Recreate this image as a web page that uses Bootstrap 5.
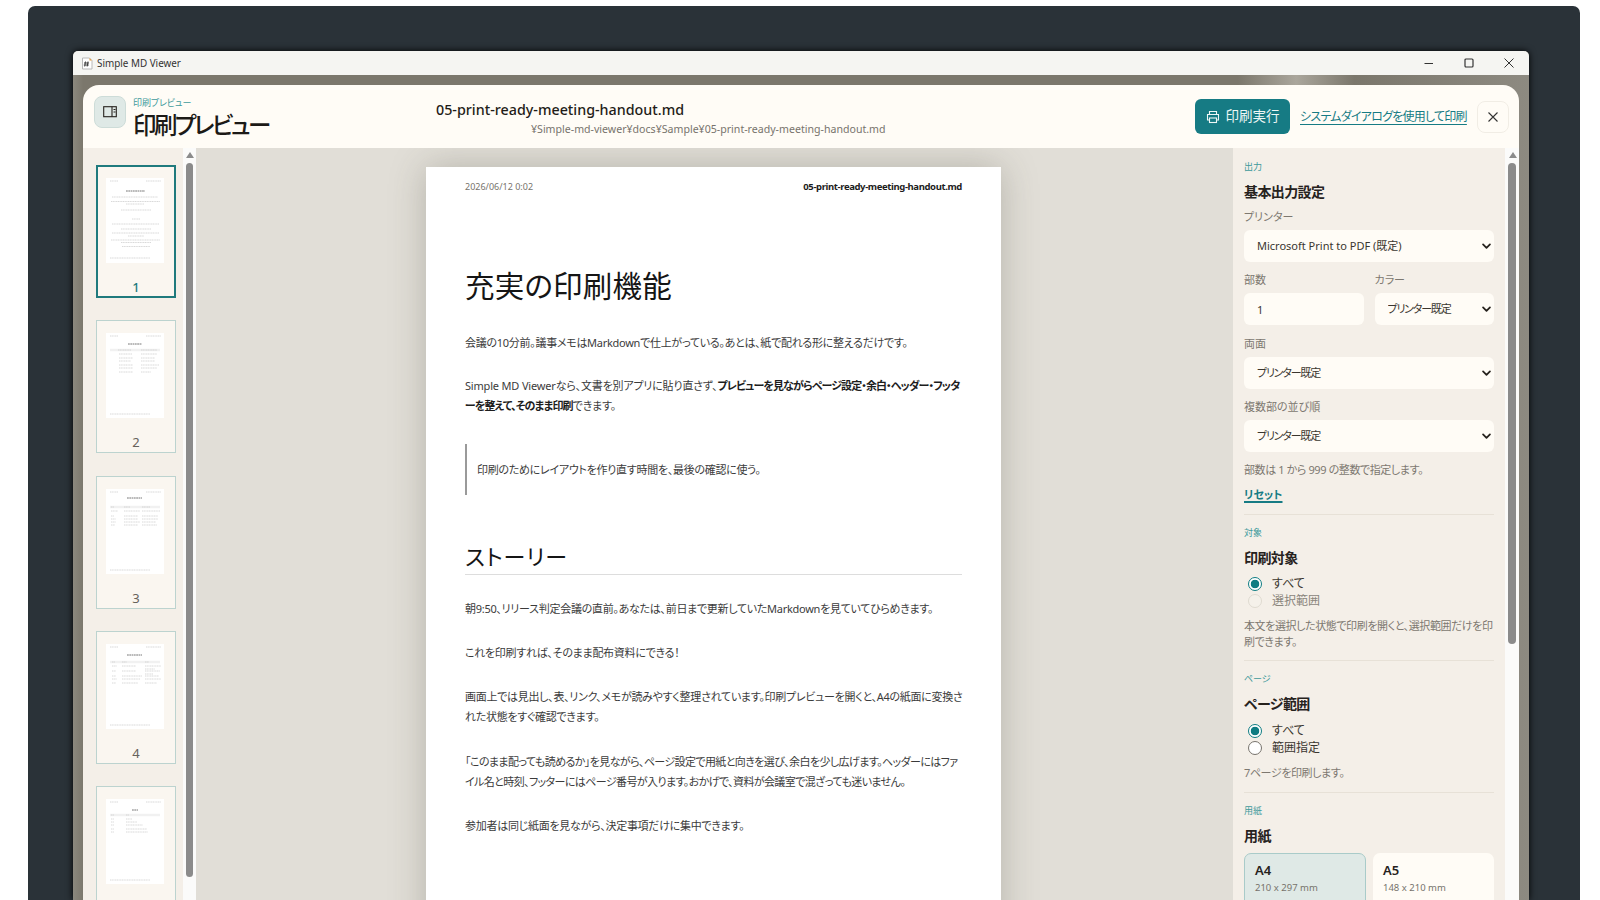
<!DOCTYPE html>
<html lang="ja">
<head>
<meta charset="utf-8">
<title>Simple MD Viewer</title>
<link href="https://cdn.jsdelivr.net/npm/bootstrap@5.3.0/dist/css/bootstrap.min.css" rel="stylesheet">
<style>
html,body{height:900px;overflow:hidden;background:#fff}
body{font-family:"Noto Sans","Noto Sans CJK JP",sans-serif;color:#26221d;font-feature-settings:"palt"}
.desk{margin:6px 20px 0 28px;height:894px;background:#2a3238;border-radius:7px 7px 0 0;padding:45px 51px 0 45px}
.appwin{height:849px;box-shadow:0 0 7px #000;border-radius:5px 5px 0 0;overflow:hidden;background:#7f7b71}
.titlebar{height:24px;background:#f5f5f2;padding-left:8px;font-size:9.900px;color:#333}
.win-ctl{width:40px;height:24px}
.scrim{height:825px;padding:10px 10px 0;background:linear-gradient(90deg,#8b887e 0,#7b776c 0.7%,#7b776c 80%,#aaa69c 84%,#7b776c 88%,#8d8a81 100%)}
.dialog{height:815px;background:#fffcf6;border-radius:16px 16px 0 0;overflow:hidden}
.dlg-head{height:63px;flex:none}
.head-left{width:353px;padding:12px 0 0 11px;gap:7px}
.panel-icon{width:32px;height:32px;margin-top:-1px;background:#dfe9e6;border:1px solid #cddcd8;border-radius:8px}
.kicker{font-size:9px;line-height:12px;color:#3f9a9c;letter-spacing:-.1px}
.big-title{font-size:23.500px;line-height:30px;font-weight:500;margin-top:1px;letter-spacing:-2.600px;color:#1c1a17}
.file-block{padding-top:15px}
.file-name{font-size:14.300px;line-height:20px;font-weight:500;color:#1f1c18}
.file-path{font-size:10.600px;line-height:14px;margin:2px 0 0 95px;color:#77736c}
.head-right{margin-left:auto;padding:14px 10px 0 0;height:49px;gap:10px}
.btn-print{height:35px;width:95px;background:#167b84;color:#eef7f6;border:0;border-radius:6px;font-size:13.500px;padding:0;gap:6px}
.btn-print:hover{background:#167b84;color:#eef7f6}
.sys-link{font-size:12px;letter-spacing:-.750px;color:#167b84;text-decoration-thickness:1px;text-underline-offset:3px;width:166px;white-space:nowrap}
.btn-x{width:32px;height:32px;background:#fffcf6;border:1px solid #f1ede5;border-radius:8px;padding:0;margin-left:1px}
.dlg-body{flex:1;min-height:0}
.thumbs{width:100px;background:#f4efe8;padding:17px 7px 0 13px;gap:22.300px;overflow:hidden}
.thumb{flex:none;width:80px;height:133px;background:#faf6f0;border:1px solid #bcd3cf;padding:12px 9px 0;text-align:center;font-size:13px;line-height:16px;color:#66625b}
.thumb svg{display:block;background:#fff}
.thumb-no{margin-top:16px}
.thumb-on{border:2px solid #1f7a7d;padding:11px 8px 0;color:#1f7a7d;font-weight:500}
.sbar{width:13px;background:#fbfbfa}
.sbar-r{width:14px}
.sb-arrow{width:0;height:0;border:4px solid transparent;border-top:0;border-bottom:6px solid #8b8b8b;margin:4px auto 0 3px}
.sbar-r .sb-arrow{margin-left:4px}
.sb-thumb{width:7px;margin:5px 0 0 3px;background:#8b8b8b;border-radius:4px}
.sbar-r .sb-thumb{width:8px;margin-left:3px}
.stage{flex:1;background:#e1ded7;padding:19px 0 0 230px;overflow:hidden}
.sheet{width:575px;height:800px;background:#fff;box-shadow:0 0 34px rgba(70,70,55,.28);padding:13px 39px 0;font-size:11px;line-height:20px;color:#3b3b3b;letter-spacing:-.28px}
.sheet-top{height:14px;line-height:14px;font-size:9px;color:#77736c;letter-spacing:0}
.sheet-top b{color:#222;font-weight:600;font-size:9.500px;letter-spacing:-.380px}
.doc-h1{font-size:29.500px;line-height:36px;font-weight:400;color:#151515;margin:74px 0 0;letter-spacing:.2px}
.sheet p{margin:0;white-space:nowrap}
.sheet .p-lead{margin-top:29px}
.sheet .p-mix{margin-top:23px;letter-spacing:-.18px}
.sheet .p-mix b{letter-spacing:-.9px}
.sheet .p-top{margin-top:24px}
.sheet .p-a{margin-top:24px}
.sheet .p-tight{margin-top:25px;letter-spacing:-.6px}
.quote{border-left:2px solid #9a9a9a;height:51px;padding-left:10px;line-height:52px;margin:28px 0 0}
.doc-h2{font-size:22px;line-height:30px;font-weight:400;color:#151515;border-bottom:1px solid #ddd;height:37px;margin:43px 0 0;padding-top:3px;letter-spacing:1px}
.sheet b{font-weight:700;color:#1d1d1d}
.settings{width:272px;background:#f4efe8;padding:13px 11px 0 11px;overflow:hidden}
.sec-label{font-size:9px;line-height:12px;color:#3f9a9c}
.sec-head{font-size:14px;line-height:20px;font-weight:700;margin-top:9px;color:#26221d;letter-spacing:-.6px}
.fld{font-size:11px;line-height:14px;color:#7d7870;margin:11px 0 6px}
.fld-first{margin-top:8px}
.fld-mid{margin-top:12px}
.sel{height:32px;background-color:#fffcf6;border:0;border-radius:6px;font-size:11px;color:#3a362f;padding:0 24px 0 13px;background-image:url("data:image/svg+xml,%3csvg xmlns='http://www.w3.org/2000/svg' viewBox='0 0 16 16'%3e%3cpath fill='none' stroke='%2326221d' stroke-linecap='round' stroke-linejoin='round' stroke-width='2.600' d='M3 5l5 5 5-5'/%3e%3c/svg%3e");background-position:right 2px center;background-size:11px 11px;box-shadow:none;font-feature-settings:"palt"}
.sel-ja{letter-spacing:-1.200px}
input.sel{background-image:none}
.count-col,.color-col{flex:1 1 0;min-width:0}
.pair{gap:11px}
.hint{font-size:11px;line-height:14px;color:#7d7870;margin-top:11px;letter-spacing:-.4px;white-space:nowrap}
.hint-2{line-height:16px;margin-top:9px}
.hint-3{margin-top:10px}
.reset{display:inline-block;font-size:11px;line-height:16px;font-weight:700;margin-top:10px;color:#167b84;text-decoration-thickness:2px;text-underline-offset:2px}
.sep{height:1px;background:#e7e1d7;margin:12px 0}
.sep-a{margin-top:9px}
.sep-b{margin-top:10px}
.radio-row{min-height:17px;line-height:17px;font-size:12px;padding-left:28px;margin:0;color:#3a362f}
.radio-row .form-check-input{width:14px;height:14px;margin:2px 0 0 -24px;border:1px solid #77736c;background-color:#fff}
.radio-row .form-check-input:checked{border-color:#0f7c82;background-color:#fff;background-image:radial-gradient(circle,#0f7c82 0 4px,#fff 4.600px);background-size:auto}
.radio-row .form-check-input:disabled{opacity:.9;border-color:#ddd8ce;background-color:#f6f2eb}
.radio-row .form-check-input:disabled~.form-check-label{opacity:1;color:#8a857c}
.radios{margin-top:7px}
.radios-2{margin-top:8px}
.paper-row{margin-top:7px;gap:7px}
.paper{height:60px;width:121px;background:#fffcf6;border-radius:7px;padding:9px 10px;font-size:13px;line-height:16px;font-weight:600;color:#26221d}
.paper small{display:block;font-size:9.500px;line-height:14px;font-weight:400;color:#77736c;margin-top:3px}
.paper-on{background:#dfe9e6;border:1px solid #a9cbc9;width:122px;padding:8px 10px}
.mini{stroke:#c9c9c9;stroke-width:.7;stroke-dasharray:1.200 .5;fill:none}
.mini-t{stroke:#777;stroke-width:1;stroke-dasharray:1.800 .5;fill:none}
</style>
</head>
<body>
<div class="desk">
<div class="appwin">
  <div class="titlebar d-flex align-items-center">
    <svg width="12" height="13" viewBox="0 0 12 13"><path d="M1.5 1h7l2.500 2.500v8.500h-9.500z" fill="#fff" stroke="#b9b9b9"/><path d="M8.500 1l2.500 2.500h-2.500z" fill="#e59a3c"/><path d="M4.500 4.500l-.8 5M7 4.500l-.8 5M3 6h5M2.800 8h5" stroke="#333" fill="none" stroke-width=".9"/></svg>
    <span class="ms-1">Simple MD Viewer</span>
    <div class="ms-auto d-flex">
      <div class="win-ctl d-flex align-items-center justify-content-center"><svg width="10" height="10" viewBox="0 0 10 10"><path d="M.5 5.500h8.500" stroke="#333" fill="none"/></svg></div>
      <div class="win-ctl d-flex align-items-center justify-content-center"><svg width="10" height="10" viewBox="0 0 10 10"><rect x="1" y="1" width="8" height="8" rx="1" stroke="#333" fill="none" stroke-width="1.200"/></svg></div>
      <div class="win-ctl d-flex align-items-center justify-content-center"><svg width="10" height="10" viewBox="0 0 10 10"><path d="M.5.500l9 9M9.500.500l-9 9" stroke="#333" fill="none"/></svg></div>
    </div>
  </div>
  <div class="scrim">
    <div class="dialog d-flex flex-column">
      <header class="dlg-head d-flex">
        <div class="head-left d-flex flex-shrink-0">
          <div class="panel-icon d-flex align-items-center justify-content-center flex-shrink-0">
            <svg width="14" height="12" viewBox="0 0 14 12"><rect x=".7" y=".7" width="12.600" height="10" fill="none" stroke="#26221d" stroke-width="1.100"/><path d="M9 .7v10M10.500 3.500h2M10.500 6h2" stroke="#26221d" fill="none" stroke-width="1.100"/></svg>
          </div>
          <div>
            <div class="kicker">印刷プレビュー</div>
            <div class="big-title text-nowrap">印刷プレビュー</div>
          </div>
        </div>
        <div class="file-block">
          <div class="file-name text-nowrap">05-print-ready-meeting-handout.md</div>
          <div class="file-path text-nowrap">¥Simple-md-viewer¥docs¥Sample¥05-print-ready-meeting-handout.md</div>
        </div>
        <div class="head-right d-flex align-items-center">
          <button class="btn btn-print d-flex align-items-center justify-content-center" type="button">
            <svg width="14" height="14" viewBox="0 0 14 14" fill="none" stroke="#eef7f6" stroke-width="1.100"><path d="M3.500 4.500v-3h7v3M3.500 10h-2v-5.500h11v5.500h-2"/><rect x="3.500" y="8" width="7" height="4.500"/></svg>
            <span>印刷実行</span>
          </button>
          <a class="sys-link" href="#">システムダイアログを使用して印刷</a>
          <button class="btn btn-x d-flex align-items-center justify-content-center" type="button" aria-label="閉じる">
            <svg width="10" height="10" viewBox="0 0 10 10"><path d="M.5.500l9 9M9.500.500l-9 9" stroke="#333" fill="none" stroke-width="1.100"/></svg>
          </button>
        </div>
      </header>
      <div class="dlg-body d-flex">
        <nav class="thumbs d-flex flex-column flex-shrink-0">
          <div class="thumb thumb-on">
            <svg width="58" height="85" viewBox="0 0 58 85"><path class="mini" d="M4 3h8M40 3h15M6 19h46M5 23.500h49M20 26h18M15 32h30M26 41h8M6 46h47M15 51h30M6 55h47M22 58h16M5 62h49M15 64.500h30M16 68.500h28M4 80h40"/><path class="mini-t" d="M20 13h19"/></svg>
            <div class="thumb-no">1</div>
          </div>
          <div class="thumb">
            <svg width="58" height="85" viewBox="0 0 58 85"><path d="M4 17h50" stroke="#f1f1f1" stroke-width="2.500"/><path class="mini" d="M4 3h8M40 3h15M12 17h13M35 17h16M13 21h13M35 21h16M13 25h14M35 25h14M13 28h12M35 28h14M13 32h14M35 32h18M13 35h14M35 35h16M13 39h14M35 39h10M4 81h40"/><path class="mini-t" d="M22 11h14"/></svg>
            <div class="thumb-no">2</div>
          </div>
          <div class="thumb">
            <svg width="58" height="85" viewBox="0 0 58 85"><path d="M4 18h50" stroke="#f1f1f1" stroke-width="2.500"/><path class="mini" d="M4 3h8M40 3h15M5 18h3M18 18h6M36 18h8M5 22h7M18 22h16M36 22h18M5 27h3M18 27h14M36 27h16M5 30h5M18 30h14M36 30h16M5 33h5M18 33h16M36 33h14M5 36h4M18 36h14M36 36h15M4 81h40"/><path class="mini-t" d="M21 9h15"/></svg>
            <div class="thumb-no">3</div>
          </div>
          <div class="thumb">
            <svg width="58" height="85" viewBox="0 0 58 85"><path d="M4 18h50" stroke="#f1f1f1" stroke-width="2.500"/><path class="mini" d="M4 3h8M40 3h15M6 18h3M16 18h5M39 18h4M6 22h5M16 22h14M39 22h16M39 25h10M6 27h4M16 27h14M39 27h15M39 30h8M6 32h4M16 32h20M39 32h14M6 35h5M16 35h18M39 35h16M6 39h4M16 39h16M39 39h12M4 81h40"/><path class="mini-t" d="M21 11h15"/></svg>
            <div class="thumb-no">4</div>
          </div>
          <div class="thumb">
            <svg width="58" height="85" viewBox="0 0 58 85"><path d="M4 16h50" stroke="#f1f1f1" stroke-width="2.500"/><path class="mini" d="M4 3h8M40 3h15M5 16h3M20 16h3M5 20h3M20 20h6M5 23h3M20 23h11M5 26h3M20 26h17M5 30h3M20 30h21M5 33h3M20 33h22M4 81h40"/><path class="mini-t" d="M26 11h6"/></svg>
          </div>
        </nav>
        <div class="sbar flex-shrink-0">
          <div class="sb-arrow"></div>
          <div class="sb-thumb" style="height:714px"></div>
        </div>
        <main class="stage">
          <article class="sheet">
            <div class="sheet-top d-flex justify-content-between"><span>2026/06/12 0:02</span><b>05-print-ready-meeting-handout.md</b></div>
            <h1 class="doc-h1">充実の印刷機能</h1>
            <p class="p-lead">会議の10分前。議事メモはMarkdownで仕上がっている。あとは、紙で配れる形に整えるだけです。</p>
            <p class="p-mix">Simple MD Viewerなら、文書を別アプリに貼り直さず、<b>プレビューを見ながらページ設定・余白・ヘッダー・フッタ<br>ーを整えて、そのまま印刷</b>できます。</p>
            <div class="quote">印刷のためにレイアウトを作り直す時間を、最後の確認に使う。</div>
            <h2 class="doc-h2">ストーリー</h2>
            <p class="p-top">朝9:50、リリース判定会議の直前。あなたは、前日まで更新していたMarkdownを見ていてひらめきます。</p>
            <p class="p-a">これを印刷すれば、そのまま配布資料にできる！</p>
            <p class="p-a">画面上では見出し、表、リンク、メモが読みやすく整理されています。印刷プレビューを開くと、A4の紙面に変換さ<br>れた状態をすぐ確認できます。</p>
            <p class="p-tight">「このまま配っても読めるか」を見ながら、ページ設定で用紙と向きを選び、余白を少し広げます。ヘッダーにはファ<br>イル名と時刻、フッターにはページ番号が入ります。おかげで、資料が会議室で混ざっても迷いません。</p>
            <p class="p-a">参加者は同じ紙面を見ながら、決定事項だけに集中できます。</p>
          </article>
        </main>
        <aside class="settings flex-shrink-0">
          <div class="sec-label">出力</div>
          <div class="sec-head">基本出力設定</div>
          <div class="fld fld-first">プリンター</div>
          <select class="form-select sel"><option>Microsoft Print to PDF (既定)</option></select>
          <div class="d-flex pair">
            <div class="count-col">
              <div class="fld">部数</div>
              <input class="form-control sel" value="1">
            </div>
            <div class="color-col">
              <div class="fld">カラー</div>
              <select class="form-select sel sel-ja"><option>プリンター既定</option></select>
            </div>
          </div>
          <div class="fld fld-mid">両面</div>
          <select class="form-select sel sel-ja"><option>プリンター既定</option></select>
          <div class="fld">複数部の並び順</div>
          <select class="form-select sel sel-ja"><option>プリンター既定</option></select>
          <div class="hint">部数は 1 から 999 の整数で指定します。</div>
          <a class="reset" href="#">リセット</a>
          <div class="sep sep-a"></div>
          <div class="sec-label">対象</div>
          <div class="sec-head">印刷対象</div>
          <div class="radios">
            <div class="form-check radio-row"><input class="form-check-input" type="radio" name="t" id="t1" checked><label class="form-check-label" for="t1">すべて</label></div>
            <div class="form-check radio-row"><input class="form-check-input" type="radio" name="t" id="t2" disabled><label class="form-check-label" for="t2">選択範囲</label></div>
          </div>
          <div class="hint hint-2">本文を選択した状態で印刷を開くと、選択範囲だけを印<br>刷できます。</div>
          <div class="sep sep-b"></div>
          <div class="sec-label">ページ</div>
          <div class="sec-head">ページ範囲</div>
          <div class="radios radios-2">
            <div class="form-check radio-row"><input class="form-check-input" type="radio" name="p" id="p1" checked><label class="form-check-label" for="p1">すべて</label></div>
            <div class="form-check radio-row"><input class="form-check-input" type="radio" name="p" id="p2"><label class="form-check-label" for="p2">範囲指定</label></div>
          </div>
          <div class="hint hint-3">7ページを印刷します。</div>
          <div class="sep"></div>
          <div class="sec-label">用紙</div>
          <div class="sec-head">用紙</div>
          <div class="d-flex paper-row">
            <div class="paper paper-on">A4<small>210 x 297 mm</small></div>
            <div class="paper">A5<small>148 x 210 mm</small></div>
          </div>
        </aside>
        <div class="sbar sbar-r flex-shrink-0">
          <div class="sb-arrow"></div>
          <div class="sb-thumb" style="height:481px"></div>
        </div>
      </div>
    </div>
  </div>
</div>
</div>
</body>
</html>
